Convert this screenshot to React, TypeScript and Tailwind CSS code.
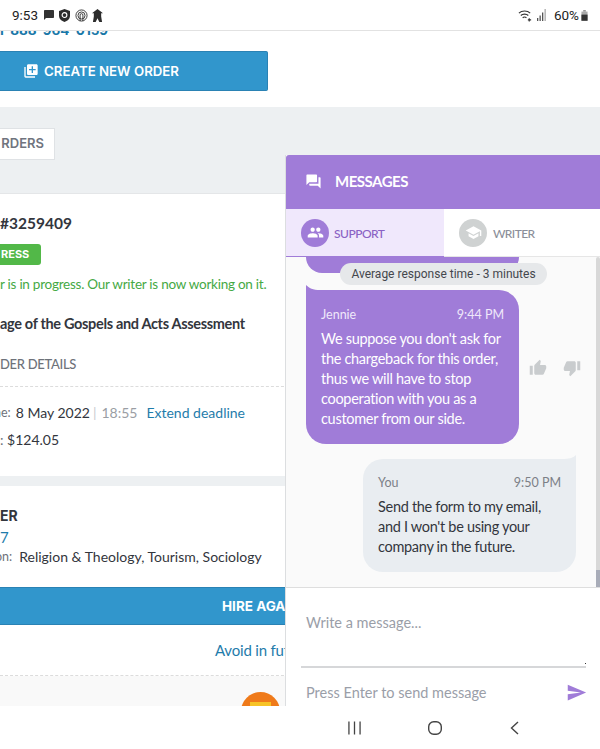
import React from 'react';
import { MdChatBubble, MdGroup, MdLibraryAdd, MdQuestionAnswer, MdSchool, MdSend, MdThumbDown, MdThumbUp } from 'react-icons/md';

const StatusBar = () => (
  <div className="relative z-20 h-[31px] shrink-0 bg-white border-b border-[#e2e2e2] flex items-center justify-between pl-3 pr-3 font-['Roboto',sans-serif] text-[#222]">
    <div className="flex items-center gap-[4px]">
      <span className="text-[13.5px] mr-[1px]">9:53</span>
      <MdChatBubble className="w-[12px] h-[12px] text-[#333]" />
      <svg viewBox="0 0 12 14" className="w-[11px] h-[13px]">
        <path d="M6 0 L12 2 V7 C12 11 9 13 6 14 C3 13 0 11 0 7 V2 Z" fill="#2c2c2c" />
        <circle cx="6" cy="6.5" r="2.6" fill="none" stroke="#fff" strokeWidth="1.2" />
      </svg>
      <svg viewBox="0 0 14 14" className="ml-[1px] w-[13px] h-[13px]" fill="none" stroke="#333" strokeWidth="1">
        <circle cx="7" cy="7" r="6" />
        <circle cx="7" cy="7" r="3.8" />
        <path d="M5.5 13 V6.5 a1.5 1.5 0 0 1 3 0 V13" />
      </svg>
      <svg viewBox="0 0 12 14" className="w-[11px] h-[13px]" fill="#2c2c2c">
        <path d="M6 0 L12 4.5 H10 V8 L11 14 H8 L6 10 L4 14 H1 L2 8 V4.5 H0 Z" />
      </svg>
    </div>
    <div className="flex items-center gap-[4px]">
      <svg viewBox="0 0 16 13" className="w-[15px] h-[13px]" fill="none" stroke="#333" strokeWidth="1.2">
        <path d="M1 4 C4 1 10 1 13 4" />
        <path d="M3 6.5 C5 4.5 9 4.5 11 6.5" />
        <path d="M5 9 C6 8 8 8 9 9" />
        <path d="M12 9.5 V13 M10.5 11.2 H14" />
      </svg>
      <svg viewBox="0 0 10 12" className="w-[10px] h-[12px]" fill="#555">
        <rect x="0" y="9" width="1.3" height="3" />
        <rect x="2.5" y="6.5" width="1.3" height="5.5" />
        <rect x="5" y="3.5" width="1.3" height="8.5" />
        <rect x="7.5" y="0" width="1.3" height="12" fill="#aaa" />
      </svg>
      <span className="text-[13.5px] ml-[3px]">60%</span>
      <svg viewBox="0 0 8 12" className="w-[7px] h-[11px] -ml-[2px]">
        <rect x="2.5" y="0" width="3" height="1.5" fill="#777" />
        <rect x="0.5" y="1.5" width="7" height="10.5" fill="#aaa" />
        <rect x="0.5" y="5" width="7" height="7" fill="#333" />
      </svg>
    </div>
  </div>
);

const PageBehind = () => (
  <div className="flex flex-col h-[675px] overflow-hidden bg-[#edf0f2] font-['Lato',sans-serif]">
    <div className="h-[76px] shrink-0 bg-white">
      <div className="-mt-[11px] -ml-[2px] h-[20px] font-['Inter',sans-serif] font-bold text-[13.5px] leading-[20px] text-[#1a78a8] whitespace-nowrap">
        1-888-964-0159
      </div>
      <div className="mt-[11px] w-[268px] h-[40px] bg-[#3196cc] border border-l-0 border-[#2a82b4] rounded-r-[2px] flex items-center pl-[23px] gap-[5px] text-white font-['Inter',sans-serif] font-semibold text-[13.25px]">
        <MdLibraryAdd className="w-[16px] h-[16px]" />
        <span className="mt-[1px]">CREATE NEW ORDER</span>
      </div>
    </div>
    <div className="h-[86px] shrink-0 pt-[21px]">
      <div className="w-[55px] h-[32px] bg-white border-r border-b border-t border-[#dfe2e5] overflow-hidden flex items-center justify-end pr-[10px] font-['Inter',sans-serif] font-semibold text-[13px] text-[#70747e] whitespace-nowrap">
        RDERS
      </div>
    </div>

    <div className="h-[283px] shrink-0 bg-white border-t border-[#e4e6e8] text-[#33363d]">
      <div className="mt-[19px] h-[20px] leading-[20px] font-bold text-[15.5px] whitespace-nowrap">#3259409</div>
      <div className="mt-[11px] w-[41px] h-[21px] bg-[#52b848] rounded-r-[3px] flex items-center pl-[1px] text-white font-['Inter',sans-serif] font-bold text-[11px]">
        RESS
      </div>
      <div className="mt-[10px] h-[18px] leading-[18px] text-[13.5px] tracking-[-0.25px] text-[#45a944] whitespace-nowrap">r is in progress. Our writer is now working on it.</div>
      <div className="mt-[22px] h-[18px] leading-[18px] font-bold text-[14.5px] tracking-[-0.33px] whitespace-nowrap">age of the Gospels and Acts Assessment</div>
      <div className="mt-[22px] h-[18px] leading-[18px] font-medium text-[13px] text-[#6e727a] tracking-[-0.3px] whitespace-nowrap">DER DETAILS</div>
      <div className="mt-[13px] border-t border-dashed border-[#dcdcdc]" />
      <div className="-ml-[6px] mt-[16px] h-[20px] leading-[20px] text-[14px] whitespace-nowrap flex items-center">
        <span className="text-[12.5px] text-[#6e727a]">ne:</span>
        <span className="ml-[5px]">8 May 2022</span>
        <span className="ml-[3px] text-[#c9ccd0]">|</span>
        <span className="ml-[5px] text-[#9a9ea4]">18:55</span>
        <span className="ml-[9px] text-[#1f7cab]">Extend deadline</span>
      </div>
      <div className="mt-[7px] h-[20px] leading-[20px] text-[14px] whitespace-nowrap">
        <span className="text-[#6e727a]">:</span> $124.05
      </div>
    </div>

    <div className="h-[10px] shrink-0" />

    <div className="flex-1 bg-white text-[#33363d] flex flex-col">
      <div className="mt-[21px] h-[18px] leading-[18px] font-['Inter',sans-serif] font-bold text-[14px]">ER</div>
      <div className="mt-[2px] h-[20px] leading-[20px] text-[15px] text-[#1f7cab]">7</div>
      <div className="-ml-[5px] h-[20px] leading-[20px] text-[14px] whitespace-nowrap flex items-center">
        <span className="text-[12.5px] text-[#6e727a]">on:</span>
        <span className="ml-[7px]">Religion &amp; Theology, Tourism, Sociology</span>
      </div>
      <div className="mt-[20px] h-[38px] shrink-0 bg-[#3196cc] border-y border-[#2a82b4] flex items-center pl-[222px] text-white font-['Inter',sans-serif] font-bold text-[13.5px] whitespace-nowrap">
        HIRE AGAIN
      </div>
      <div className="mt-[15px] h-[20px] leading-[20px] pl-[215px] text-[15px] tracking-[-0.2px] text-[#1f7cab] whitespace-nowrap">Avoid in future</div>
      <div className="mt-[15px] border-t border-dashed border-[#dcdcdc]" />
      <div className="flex-1 bg-[#f9f9f9] pl-[241px] pt-[16px]">
        <div className="w-[39px] h-[39px] rounded-full bg-[#ef7a1a] flex justify-center pt-[10px]">
          <div className="w-[21px] h-[20px] bg-[#f7c326]" />
        </div>
      </div>
    </div>
  </div>
);

const MessagesPanel = () => (
  <div className="absolute left-[285px] top-[155px] z-10 w-[315px] h-[551px] flex flex-col bg-white border-l border-[#dcdee0] font-['Lato',sans-serif]">
    <div className="h-[54px] shrink-0 bg-[#a07cd8] rounded-tl-[3px] flex items-center pl-[19px] pb-[1px] text-white">
      <MdQuestionAnswer className="w-[17px] h-[17px]" />
      <span className="ml-[13px] font-bold text-[15px] tracking-[-0.5px]">MESSAGES</span>
    </div>

    <div className="h-[48px] shrink-0 flex">
      <div className="w-[158px] bg-[#f0e8fc] border-b border-[#a07cd8] flex items-center pl-[15px]">
        <div className="w-[28px] h-[28px] rounded-full bg-[#a07cd8] flex items-center justify-center">
          <MdGroup className="w-[17px] h-[17px] text-white" />
        </div>
        <span className="ml-[5px] mt-[3px] font-medium text-[12px] text-[#8a62c4] tracking-[-0.5px]">SUPPORT</span>
      </div>
      <div className="flex-1 border-b border-[#e6e6e6] flex items-center pl-[15px]">
        <div className="w-[28px] h-[28px] rounded-full bg-[#cfd2d2] flex items-center justify-center">
          <MdSchool className="w-[17px] h-[17px] text-white" />
        </div>
        <span className="ml-[6px] mt-[3px] font-medium text-[12px] text-[#8b8f9a] tracking-[-0.6px]">WRITER</span>
      </div>
    </div>

    <div className="relative h-[331px] shrink-0 bg-[#fafafa] border-b border-[#dedede] overflow-hidden">
      <div className="w-[213px] h-[16px] ml-[20px] rounded-b-[18px] bg-[#a07cd8]" />
      <div className="absolute left-[54px] top-[6px] w-[207px] h-[22px] rounded-full bg-[#e6e8ea] flex items-center justify-center font-['Roboto',sans-serif] text-[12px] text-[#44474d]">
        Average response time - 3 minutes
      </div>

      <div className="mt-[17px] ml-[20px] flex items-center">
        <div className="relative shrink-0 w-[213px] h-[154px] bg-[#a07cd8] rounded-[20px] rounded-tl-none pl-[15px] pr-[15px] pt-[16px] text-white">
          <svg viewBox="0 0 14 6" className="absolute -top-[5px] left-0 w-[14px] h-[6px]" fill="#a07cd8">
            <path d="M0 0 C3 3 7 5 14 5 V6 H0 Z" />
          </svg>
          <div className="flex justify-between text-[12.5px] leading-[18px] text-[#efe8fa]">
            <span>Jennie</span>
            <span>9:44 PM</span>
          </div>
          <p className="mt-[5px] text-[14.5px] leading-[20px] tracking-[-0.3px]">
            We suppose you don't ask for the chargeback for this order, thus we will have to stop cooperation with you as a customer from our side.
          </p>
        </div>
        <MdThumbUp className="ml-[10px] mt-[2px] w-[18px] h-[18px] text-[#c9ccce]" />
        <MdThumbDown className="ml-[16px] mt-[2px] w-[18px] h-[18px] text-[#c9ccce]" />
      </div>

      <div className="mt-[15px] ml-[77px] relative w-[213px] h-[113px] bg-[#e9edf1] rounded-[20px] rounded-tr-none px-[15px] pt-[15px] text-[#33363d]">
        <svg viewBox="0 0 14 5" className="absolute -top-[4px] right-0 w-[14px] h-[5px]" fill="#e9edf1">
          <path d="M14 0 C11 3 7 4 0 4 V5 H14 Z" />
        </svg>
        <div className="flex justify-between text-[12.5px] leading-[18px] text-[#7c8087]">
          <span>You</span>
          <span>9:50 PM</span>
        </div>
        <p className="mt-[5px] text-[14.5px] leading-[20px] tracking-[-0.3px]">
          Send the form to my email, and I won't be using your company in the future.
        </p>
      </div>

      <div className="absolute right-0 top-0 bottom-0 w-[4px] rounded-t-[2px] bg-[#d8d8d8]">
        <div className="absolute bottom-0 w-full h-[17px] bg-[#a8acb8]" />
      </div>
    </div>

    <div className="flex-1 bg-white flex flex-col pl-[15px] pr-[14px]">
      <div className="h-[80px] shrink-0 border-b-2 border-[#d6d7d9] relative pl-[5px] pt-[25px] text-[14.5px] leading-[20px] text-[#9a9ea8]">
        Write a message...
        <span className="absolute right-0 bottom-[2px] w-[1px] h-[1px] bg-[#333]" />
      </div>
      <div className="flex items-center justify-between pl-[5px] pt-[14px]">
        <span className="text-[14.5px] leading-[20px] text-[#9a9ea8]">Press Enter to send message</span>
        <MdSend className="w-[21px] h-[21px] text-[#a07cd8] -mr-[1px]" />
      </div>
    </div>
  </div>
);

const NavBar = () => (
  <div className="relative z-20 h-[43px] shrink-0 bg-white flex items-center pl-[348px] text-[#444]">
    <svg viewBox="0 0 14 14" className="w-[13px] h-[14px]" stroke="currentColor" strokeWidth="1.4" fill="none">
      <path d="M1 0 V14 M7 0 V14 M13 0 V14" />
    </svg>
    <svg viewBox="0 0 14 14" className="ml-[67px] w-[14px] h-[14px]" stroke="currentColor" strokeWidth="1.4" fill="none">
      <rect x="0.7" y="0.7" width="12.6" height="12.6" rx="5" />
    </svg>
    <svg viewBox="0 0 9 14" className="ml-[68px] w-[9px] h-[14px]" stroke="currentColor" strokeWidth="1.4" fill="none">
      <path d="M8 1 L1.5 7 L8 13" />
    </svg>
  </div>
);

export default function App() {
  return (
    <div className="relative w-[600px] h-[749px] overflow-hidden flex flex-col bg-white">
      <StatusBar />
      <PageBehind />
      <MessagesPanel />
      <NavBar />
    </div>
  );
}
